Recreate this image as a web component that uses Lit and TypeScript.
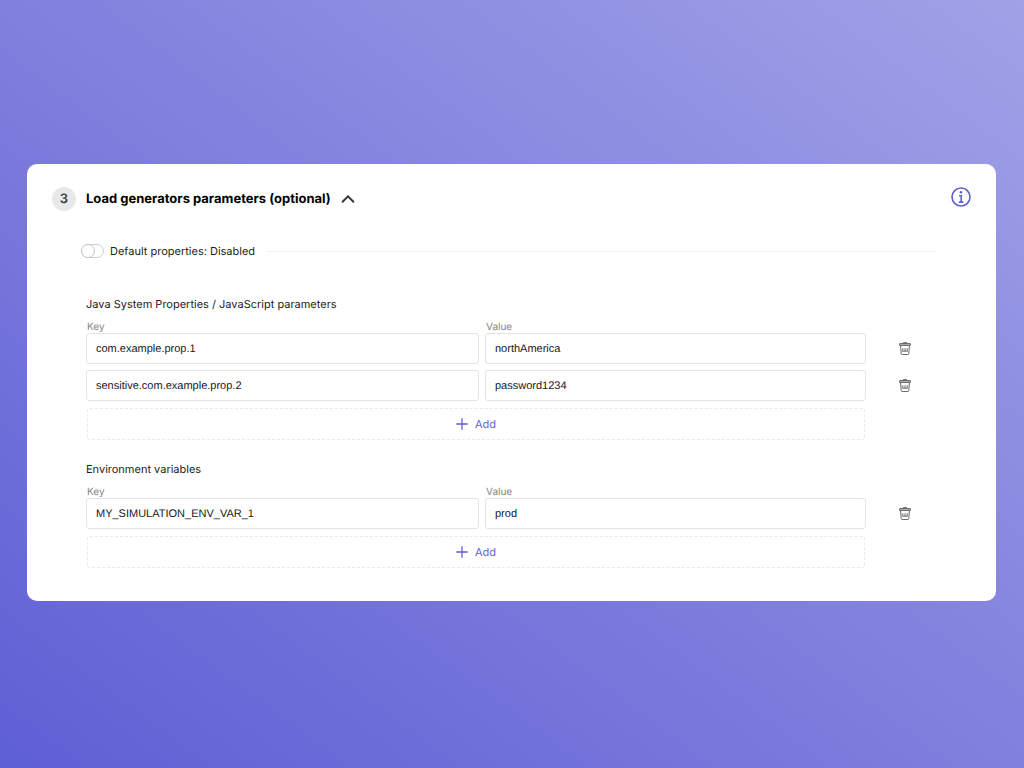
import { LitElement, html, css, nothing } from "lit";
import { customElement, property, state } from "lit/decorators.js";

interface Pair {
  key: string;
  value: string;
}

@customElement("param-group")
export class ParamGroup extends LitElement {
  @property() heading = "";
  @property({ attribute: false }) pairs: Pair[] = [];

  static styles = css`
    :host {
      display: block;
    }
    .heading {
      margin: 0;
      font-size: 11px;
      line-height: 16px;
      font-weight: 400;
      color: #1c1c22;
    }
    .grid {
      display: grid;
      grid-template-columns: 393fr 381fr 66px;
      column-gap: 6px;
    }
    .labels {
      margin-top: 9px;
      font-size: 10px;
      line-height: 12px;
      color: #85858a;
    }
    .labels label {
      padding-left: 1px;
    }
    .rows {
      display: flex;
      flex-direction: column;
      gap: 6px;
      margin-bottom: 7px;
    }
    .row {
      align-items: center;
    }
    .field {
      box-sizing: border-box;
      width: 100%;
      min-width: 0;
      height: 31px;
      margin: 0;
      padding: 0 9px;
      border: 1px solid #e3e3e5;
      border-radius: 3px;
      background: #fff;
      font: 11px/16px "Liberation Sans", Arial, sans-serif;
      text-rendering: inherit;
      color: #17171b;
      outline: none;
    }
    .field:focus {
      border-color: #5e5fd6;
    }
    .delete {
      display: flex;
      justify-self: center;
      padding: 0;
      border: 0;
      background: none;
      color: #58585c;
      cursor: pointer;
    }
    .add {
      grid-column: 1 / 3;
      display: flex;
      align-items: center;
      justify-content: center;
      gap: 7px;
      height: 32px;
      margin: 0 1px;
      padding: 0;
      border: 1px dashed #ebebed;
      border-radius: 3px;
      background: #fff;
      font: 11px/16px Inter, sans-serif;
      text-rendering: inherit;
      color: #5e5fd6;
      cursor: pointer;
    }
  `;

  private remove(index: number) {
    this.pairs = this.pairs.filter((_, i) => i !== index);
  }

  private append() {
    this.pairs = [...this.pairs, { key: "", value: "" }];
  }

  render() {
    return html`
      <h3 class="heading">${this.heading}</h3>
      <div class="grid labels">
        <label for="key-0">Key</label>
        <label for="value-0">Value</label>
      </div>
      <div class="rows">
        ${this.pairs.map(
          (pair, i) => html`
            <div class="grid row">
              <input class="field" type="text" id="key-${i}" .value=${pair.key}
                aria-label=${i > 0 ? "Key" : nothing} />
              <input class="field" type="text" id="value-${i}" .value=${pair.value}
                aria-label=${i > 0 ? "Value" : nothing} />
              <button class="delete" type="button" aria-label="Delete" @click=${() => this.remove(i)}>
                <svg width="12" height="13" viewBox="0 0 12 13" fill="none" stroke="currentColor">
                  <path d="M4.3 1.4V.6h3.4v.8" stroke-width=".9" />
                  <rect x=".5" y="1.5" width="11" height="2" rx=".4" fill="#a8a8aa" stroke-width=".8" />
                  <path d="M1.6 3.8l.6 7.7q.1 1 1 1h5.6q.9 0 1-1l.6-7.7" stroke-width=".9" />
                  <path d="M3.6 6.3v3.2M5.2 6.3v3.2M6.8 6.3v3.2M8.4 6.3v3.2M3.4 9.3h5.2" stroke-width=".7" />
                </svg>
              </button>
            </div>
          `
        )}
      </div>
      <div class="grid">
        <button class="add" type="button" @click=${this.append}>
          <svg width="12" height="12" viewBox="0 0 12 12" stroke="currentColor" stroke-width="1.3" stroke-linecap="round">
            <path d="M6 .7v10.6M.7 6h10.6" />
          </svg>
          Add
        </button>
      </div>
    `;
  }
}

@customElement("app-root")
export class AppRoot extends LitElement {
  @state() private open = true;
  @state() private defaults = false;

  private properties: Pair[] = [
    { key: "com.example.prop.1", value: "northAmerica" },
    { key: "sensitive.com.example.prop.2", value: "password1234" },
  ];
  private variables: Pair[] = [{ key: "MY_SIMULATION_ENV_VAR_1", value: "prod" }];

  static styles = css`
    :host {
      display: block;
      box-sizing: border-box;
      min-height: 100vh;
      padding: 164px 28px 100px 27px;
      background: linear-gradient(to top right, #5f5fd5, #a1a1e7);
      font-family: Inter, sans-serif;
      text-rendering: geometricPrecision;
    }
    .card {
      padding: 23px 25px 33px;
      border-radius: 10px;
      background: #fff;
    }
    .header {
      display: flex;
      align-items: flex-start;
      justify-content: space-between;
    }
    .title {
      display: flex;
      align-items: center;
      gap: 10px;
    }
    .step {
      display: grid;
      place-items: center;
      width: 24px;
      height: 24px;
      border-radius: 50%;
      background: #e8e8eb;
      font-size: 13px;
      line-height: 24px;
      font-weight: 600;
      color: #3a3a40;
    }
    .name {
      margin: 0;
      font-size: 13px;
      line-height: 24px;
      font-weight: 700;
      color: #000;
    }
    .icon {
      display: flex;
      padding: 0;
      border: 0;
      background: none;
      color: #36363b;
      cursor: pointer;
    }
    .info {
      color: #5e5fd6;
    }
    .body {
      padding: 0 33px 0 34px;
    }
    .toggle {
      display: flex;
      align-items: center;
      gap: 11px;
      margin: 32px 1px 37px -5px;
    }
    .toggle-label {
      display: flex;
      align-items: center;
      gap: 6px;
      font-size: 11px;
      line-height: 16px;
      color: #1c1c22;
    }
    .switch {
      appearance: none;
      box-sizing: border-box;
      display: flex;
      width: 23px;
      height: 14px;
      margin: 0;
      border: 1px solid #cfcfd2;
      border-radius: 7px;
      background: #fff;
    }
    .switch::before {
      content: "";
      box-sizing: border-box;
      width: 14px;
      height: 14px;
      margin: -1px;
      border: 1px solid #c6c6c9;
      border-radius: 50%;
      background: #fff;
    }
    .switch:checked {
      justify-content: flex-end;
      background: #5e5fd6;
    }
    .rule {
      flex: 1;
      height: 1px;
      margin: 0;
      border: 0;
      background: #f0f0f1;
    }
    .second {
      margin-top: 21px;
    }
  `;

  render() {
    return html`
      <section class="card">
        <header class="header">
          <div class="title">
            <span class="step">3</span>
            <h2 class="name">Load generators parameters (optional)</h2>
            <button class="icon" type="button" aria-label="Toggle section" aria-expanded=${this.open}
              @click=${() => (this.open = !this.open)}>
              <svg width="14" height="10" viewBox="0 0 14 10" fill="none" stroke="currentColor" stroke-width="2"
                stroke-linecap="round" stroke-linejoin="miter">
                <path d="M1.6 7.7L7 2.3l5.4 5.4" />
              </svg>
            </button>
          </div>
          <button class="icon info" type="button" aria-label="Information">
            <svg width="20" height="20" viewBox="0 0 20 20" fill="none" stroke="currentColor">
              <circle cx="10" cy="10" r="9" stroke-width="1.6" />
              <circle cx="10" cy="5.3" r="1.3" fill="currentColor" stroke="none" />
              <path d="M8 8.7h2.2V15M7.9 15.1h4.5" stroke-width="1.6" />
            </svg>
          </button>
        </header>
        ${this.open
          ? html`<div class="body">
              <div class="toggle">
                <label class="toggle-label">
                  <input class="switch" type="checkbox" role="switch" .checked=${this.defaults}
                    @change=${() => (this.defaults = !this.defaults)} />
                  Default properties: ${this.defaults ? "Enabled" : "Disabled"}
                </label>
                <hr class="rule" />
              </div>
              <param-group heading="Java System Properties / JavaScript parameters"
                .pairs=${this.properties}></param-group>
              <param-group class="second" heading="Environment variables" .pairs=${this.variables}></param-group>
            </div>`
          : nothing}
      </section>
    `;
  }
}
